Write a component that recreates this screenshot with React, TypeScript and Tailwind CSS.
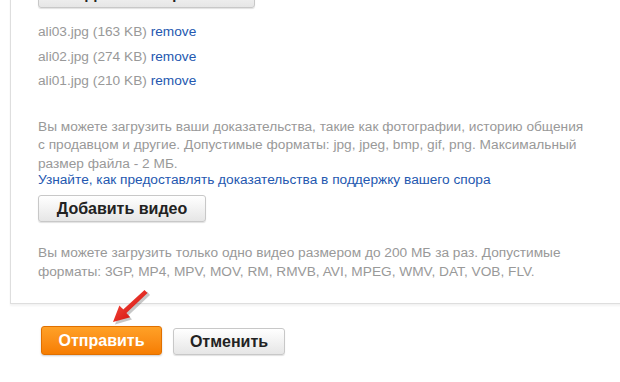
const files = [
  { name: "ali03.jpg", size: "163 KB" },
  { name: "ali02.jpg", size: "274 KB" },
  { name: "ali01.jpg", size: "210 KB" },
];

/** серая кнопка в стиле формы спора */
function GrayButton({ label, className = "" }: { label: string; className?: string }) {
  return (
    <button
      className={`rounded-[3px] border border-[#c8c8c8] bg-gradient-to-b from-white to-[#e6e6e6] text-[16px] font-bold text-[#222] shadow-[0_1px_1px_rgba(0,0,0,0.12)] ${className}`}
    >
      {label}
    </button>
  );
}

/** красная стрелка, указывающая на кнопку отправки */
function Arrow() {
  return (
    <svg className="pointer-events-none absolute left-0 top-0 h-[382px] w-[620px]" viewBox="0 0 620 382">
      <defs>
        <linearGradient id="ar" x1="0" y1="0" x2="1" y2="1">
          <stop offset="0" stopColor="#ff5a4a" />
          <stop offset="1" stopColor="#c80000" />
        </linearGradient>
      </defs>
      <polygon
        points="148,293 126.6,313.3 130,317.5 113,322.5 119.6,305.6 123.4,309.6 145,289.5"
        fill="#000"
        opacity="0.22"
        transform="translate(2,2)"
      />
      <polygon
        points="147.5,293 126.4,313 130.2,317.2 113,322 119.4,305.4 123.2,309.4 144.5,290"
        fill="url(#ar)"
      />
    </svg>
  );
}

export default function App() {
  return (
    <div className="relative h-[382px] w-[620px] overflow-hidden bg-white font-['Liberation_Sans',Arial,sans-serif]">
      {/* панель с вложениями */}
      <div className="-mt-[20px] ml-[10px] w-[640px] border-b border-l border-[#dedede] pb-[22px] pl-[27px] shadow-[0_2px_2px_rgba(0,0,0,0.05)]">
        <GrayButton label="Добавить фото" className="h-[28px] w-[217px]" />

        <ul className="mt-[12px] text-[13.7px] leading-[24.5px] text-[#999]">
          {files.map((f) => (
            <li key={f.name}>
              {f.name} ({f.size}) <span className="text-[#2458b0]">remove</span>
            </li>
          ))}
        </ul>

        <p className="mt-[24px] text-[13.7px] leading-[18.5px] text-[#999]">
          Вы можете загрузить ваши доказательства, такие как фотографии, историю общения
          <br />с продавцом и другие. Допустимые форматы: jpg, jpeg, bmp, gif, png. Максимальный
          <br />
          размер файла - 2 МБ.
        </p>
        <p className="text-[13.7px] leading-[13px] text-[#2458b0]">
          Узнайте, как предоставлять доказательства в поддержку вашего спора
        </p>

        <GrayButton label="Добавить видео" className="mt-[9px] h-[27px] w-[168px]" />

        <p className="mt-[21px] text-[13.7px] leading-[19px] text-[#999]">
          Вы можете загрузить только одно видео размером до 200 МБ за раз. Допустимые
          <br />
          форматы: 3GP, MP4, MPV, MOV, RM, RMVB, AVI, MPEG, WMV, DAT, VOB, FLV.
        </p>
      </div>

      {/* кнопки формы */}
      <div className="ml-[41px] mt-[22px] flex items-end gap-[11px]">
        <button className="h-[29px] w-[121px] rounded-[3px] border border-[#e07000] bg-gradient-to-b from-[#ffa126] to-[#f67d00] text-[16px] font-bold text-white shadow-[0_1px_2px_rgba(0,0,0,0.2)]">
          Отправить
        </button>
        <GrayButton label="Отменить" className="h-[27px] w-[112px]" />
      </div>

      <Arrow />
    </div>
  );
}
